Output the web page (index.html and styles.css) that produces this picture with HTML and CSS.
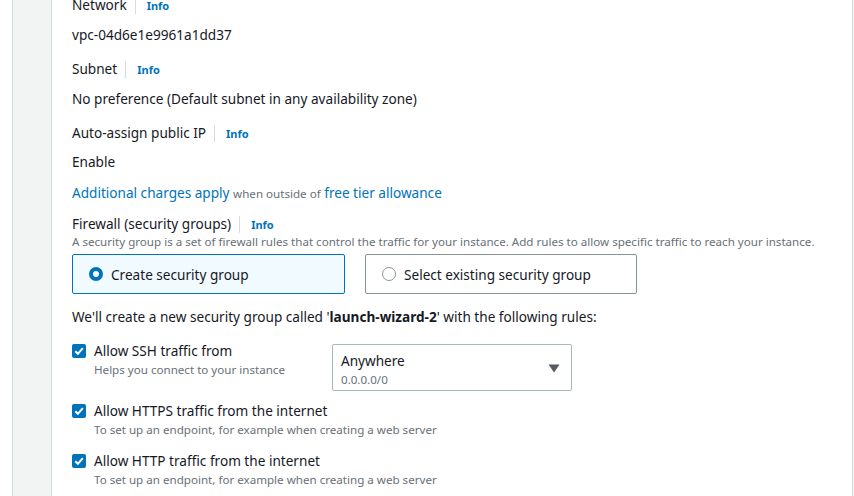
FILE: index.html
```html
<!DOCTYPE html>
<html>
<head>
<meta charset="utf-8">
<link rel="stylesheet" href="styles.css">
</head>
<body>
<div class="frame">
  <div class="panel">
    <div class="content">
      <div class="label first"><span>Network</span><span class="sep"></span><a class="info">Info</a></div>
      <div class="value">vpc-04d6e1e9961a1dd37</div>

      <div class="label"><span>Subnet</span><span class="sep"></span><a class="info">Info</a></div>
      <div class="value">No preference (Default subnet in any availability zone)</div>

      <div class="label"><span>Auto-assign public IP</span><span class="sep"></span><a class="info">Info</a></div>
      <div class="value enable">Enable</div>

      <div class="charges"><a class="link">Additional charges apply</a> <span class="muted">when outside of</span> <a class="link">free tier allowance</a></div>

      <div class="label fw"><span>Firewall (security groups)</span><span class="sep"></span><a class="info">Info</a></div>
      <div class="desc">A security group is a set of firewall rules that control the traffic for your instance. Add rules to allow specific traffic to reach your instance.</div>

      <div class="tiles">
        <div class="tile selected"><span class="radio on"></span><span>Create security group</span></div>
        <div class="tile"><span class="radio"></span><span>Select existing security group</span></div>
      </div>

      <div class="note">We'll create a new security group called '<b>launch-wizard-2</b>' with the following rules:</div>

      <div class="rule ssh">
        <span class="cb"><svg width="14" height="14" viewBox="0 0 14 14"><rect width="14" height="14" rx="2" fill="#0073bb"/><path d="M3.3 7.2 L5.9 9.8 L10.8 4.2" fill="none" stroke="#fff" stroke-width="2"/></svg></span>
        <div class="rtext narrow">
          <div class="rlabel">Allow SSH traffic from</div>
          <div class="rsub">Helps you connect to your instance</div>
        </div>
        <div class="select">
          <div class="stext">
            <div class="sval">Anywhere</div>
            <div class="ssub">0.0.0.0/0</div>
          </div>
          <svg class="caret" width="12" height="9" viewBox="0 0 12 9"><path d="M0.5 0.5 H11.5 L6 8.5 Z" fill="#545b64"/></svg>
        </div>
      </div>

      <div class="rule https">
        <span class="cb"><svg width="14" height="14" viewBox="0 0 14 14"><rect width="14" height="14" rx="2" fill="#0073bb"/><path d="M3.3 7.2 L5.9 9.8 L10.8 4.2" fill="none" stroke="#fff" stroke-width="2"/></svg></span>
        <div class="rtext">
          <div class="rlabel">Allow HTTPS traffic from the internet</div>
          <div class="rsub">To set up an endpoint, for example when creating a web server</div>
        </div>
      </div>

      <div class="rule">
        <span class="cb"><svg width="14" height="14" viewBox="0 0 14 14"><rect width="14" height="14" rx="2" fill="#0073bb"/><path d="M3.3 7.2 L5.9 9.8 L10.8 4.2" fill="none" stroke="#fff" stroke-width="2"/></svg></span>
        <div class="rtext">
          <div class="rlabel">Allow HTTP traffic from the internet</div>
          <div class="rsub">To set up an endpoint, for example when creating a web server</div>
        </div>
      </div>
    </div>
  </div>
</div>
</body>
</html>
```

FILE: styles.css
```css
* { box-sizing: border-box; }
html, body { margin: 0; padding: 0; height: 100%; overflow: hidden; }
body {
  background: #fff;
  font-family: "Noto Sans", "Open Sans", sans-serif;
  font-size: 13.6px;
  color: #16191f;
}
.frame {
  margin-left: 12px;
  height: 100%;
  background: #f2f3f3;
  border-left: 1px solid #d5dbdb;
  padding-left: 38px;
  padding-right: 1px;
  display: flex;
}
.panel {
  flex: 1;
  background: #fff;
  border-left: 1px solid #d5dbdb;
  border-right: 1px solid #d5dbdb;
  padding-left: 20px;
}
.content { display: flex; flex-direction: column; }
.label {
  display: flex;
  align-items: center;
  height: 20px;
  line-height: 20px;
  margin-top: 14px;
}
.label.first { margin-top: -5px; }
.label.fw { margin-top: 10px; }
.sep {
  width: 1px;
  height: 17px;
  background: #d5dbdb;
  margin: 0 11px 0 8px;
}
.info {
  color: #0073bb;
  font-weight: 700;
  font-size: 11px;
  margin-top: 2px;
}
.value { line-height: 20px; margin-top: 10px; }
.value.enable { margin-top: 9px; }
.charges { line-height: 20px; margin-top: 11px; }
.link { color: #0073bb; }
.muted { color: #687078; font-size: 11.6px; }
.desc {
  color: #687078;
  font-size: 11.6px;
  line-height: 16px;
  white-space: nowrap;
}
.tiles {
  display: grid;
  grid-template-columns: 273px 272px;
  column-gap: 20px;
  margin-top: 4px;
}
.tile {
  height: 40px;
  border: 1px solid #879596;
  border-radius: 2px;
  display: flex;
  align-items: center;
  padding-left: 16px;
  gap: 8px;
}
.tile.selected { background: #f1faff; border-color: #0073bb; }
.radio {
  width: 14px; height: 14px;
  border-radius: 50%;
  border: 1px solid #879596;
  background: #fff;
}
.radio.on { border: 4px solid #0073bb; }
.note { line-height: 20px; margin-top: 13px; }
.rule {
  display: flex;
  align-items: flex-start;
  margin-top: 13px;
}
.rule.ssh { margin-top: 14px; }
.rule.https { margin-top: 10px; }
.cb { width: 14px; height: 14px; margin-top: 3px; flex: none; }
.cb svg { display: block; }
.rtext { margin-left: 8px; }
.rtext.narrow { width: 238px; }
.rlabel { line-height: 20px; }
.rsub { color: #687078; font-size: 11.6px; line-height: 17px; }
.select {
  width: 240px;
  height: 47px;
  border: 1px solid #aab7b8;
  border-radius: 2px;
  margin-top: 3px;
  display: flex;
  align-items: flex-start;
  padding: 6px 11px 0 8px;
}
.stext { flex: 1; }
.sval { line-height: 19px; }
.ssub { color: #687078; font-size: 11.6px; line-height: 19px; }
.caret { display: block; margin-top: 13px; }
```
